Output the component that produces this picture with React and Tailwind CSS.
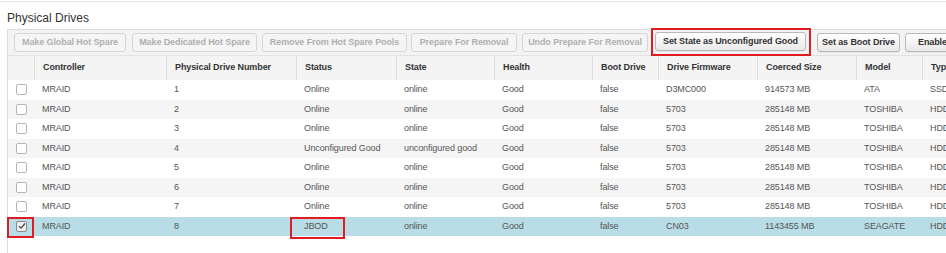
import React from 'react';

const COLS = [
  { key: 'sel', label: '', w: 'w-[26px]' },
  { key: 'controller', label: 'Controller', w: 'w-[132px]' },
  { key: 'number', label: 'Physical Drive Number', w: 'w-[130px]' },
  { key: 'status', label: 'Status', w: 'w-[100px]' },
  { key: 'state', label: 'State', w: 'w-[98px]' },
  { key: 'health', label: 'Health', w: 'w-[98px]' },
  { key: 'boot', label: 'Boot Drive', w: 'w-[66px]' },
  { key: 'firmware', label: 'Drive Firmware', w: 'w-[99px]' },
  { key: 'size', label: 'Coerced Size', w: 'w-[99px]' },
  { key: 'model', label: 'Model', w: 'w-[66px]' },
  { key: 'type', label: 'Type', w: 'w-[80px]' },
];

const DRIVES = [
  { n: '1', status: 'Online', state: 'online', fw: 'D3MC000', size: '914573 MB', model: 'ATA', type: 'SSD' },
  { n: '2', status: 'Online', state: 'online', fw: '5703', size: '285148 MB', model: 'TOSHIBA', type: 'HDD' },
  { n: '3', status: 'Online', state: 'online', fw: '5703', size: '285148 MB', model: 'TOSHIBA', type: 'HDD' },
  { n: '4', status: 'Unconfigured Good', state: 'unconfigured good', fw: '5703', size: '285148 MB', model: 'TOSHIBA', type: 'HDD' },
  { n: '5', status: 'Online', state: 'online', fw: '5703', size: '285148 MB', model: 'TOSHIBA', type: 'HDD' },
  { n: '6', status: 'Online', state: 'online', fw: '5703', size: '285148 MB', model: 'TOSHIBA', type: 'HDD' },
  { n: '7', status: 'Online', state: 'online', fw: '5703', size: '285148 MB', model: 'TOSHIBA', type: 'HDD' },
  { n: '8', status: 'JBOD', state: 'online', fw: 'CN03', size: '1143455 MB', model: 'SEAGATE', type: 'HDD', selected: true },
];

function ToolButton({ label, w, disabled, className = '' }) {
  return (
    <button
      disabled={disabled}
      className={`h-[19px] ${w} shrink-0 rounded-[3px] border font-bold text-[9px] tracking-[-0.1px] leading-none whitespace-nowrap overflow-hidden ${
        disabled
          ? 'border-[#d6d6d6] bg-[#f5f5f5] text-[#b0b0b0]'
          : 'border-[#b9b9b9] bg-gradient-to-b from-white to-[#e9e9e9] text-[#333] shadow-[0_1px_0_rgba(0,0,0,0.06)]'
      } ${className}`}
    >
      {label}
    </button>
  );
}

function Checkbox({ checked }) {
  return (
    <span
      className={`flex h-[11px] w-[11px] items-center justify-center rounded-[2px] border ${
        checked ? 'border-[#8a8a8a] bg-[#eeeeee]' : 'border-[#b5b5b5] bg-white'
      }`}
    >
      {checked && (
        <svg width="8" height="8" viewBox="0 0 8 8">
          <polyline points="1,4.2 3,6.2 7,1.5" fill="none" stroke="#444" strokeWidth="1.2" />
        </svg>
      )}
    </span>
  );
}

export default function App() {
  return (
    <div className="w-[946px] h-[253px] overflow-hidden bg-white font-['Liberation_Sans',Arial,sans-serif]">
      <div className="mt-[1px] border-t border-[#e4e4e4]" />
      <div className="ml-[7px] mt-[8px] h-[16px] text-[12px] leading-[16px] text-[#333]">Physical Drives</div>

      <div className="ml-[7px] mt-[3px] w-[1000px] h-[300px] border-l border-t border-[#dcdcdc]">
        {/* toolbar */}
        <div className="flex h-[26px] items-center border-b border-[#e2e2e2] bg-[#f3f3f3] pl-[6px]">
          <ToolButton label="Make Global Hot Spare" w="w-[112px]" disabled />
          <ToolButton label="Make Dedicated Hot Spare" w="w-[125px]" disabled className="ml-[6px]" />
          <ToolButton label="Remove From Hot Spare Pools" w="w-[145px]" disabled className="ml-[5px]" />
          <ToolButton label="Prepare For Removal" w="w-[106px]" disabled className="ml-[4px]" />
          <ToolButton label="Undo Prepare For Removal" w="w-[126px]" disabled className="ml-[5px]" />
          <div className="ml-[3px] -mt-[1px] flex h-[28px] items-center border-2 border-[#e01b22] pl-[2px] pr-[3px] pb-[1px]">
            <ToolButton label="Set State as Unconfigured Good" w="w-[151px]" />
          </div>
          <ToolButton label="Set as Boot Drive" w="w-[83px]" className="ml-[6px]" />
          <ToolButton label="Enable Security" w="w-[92px]" className="ml-[5px]" />
        </div>

        {/* header */}
        <div className="flex h-[24px] bg-[#f4f4f4] text-[9px] tracking-[-0.1px] font-bold text-[#333]">
          {COLS.map((c, i) => (
            <div
              key={c.key}
              className={`${c.w} shrink-0 flex items-center pl-[8px] whitespace-nowrap ${i > 0 ? 'border-l border-[#dedede]' : ''}`}
            >
              {c.label}
            </div>
          ))}
        </div>

        {/* rows */}
        {DRIVES.map((d, i) => {
          const bg = d.selected ? 'bg-[#b9dde6]' : i % 2 === 1 ? 'bg-[#f5f5f5]' : 'bg-white';
          const cells = ['MRAID', d.n, d.status, d.state, 'Good', 'false', d.fw, d.size, d.model, d.type];
          return (
            <div key={d.n} className={`flex h-[19.5px] ${bg} text-[9px] tracking-[-0.1px] text-[#555]`}>
              <div className="relative flex w-[26px] shrink-0 items-center pl-[8px]">
                <Checkbox checked={d.selected} />
                {d.selected && (
                  <span className="absolute -left-[1px] top-0 h-[21px] w-[27px] border-2 border-[#e01b22]" />
                )}
              </div>
              {cells.map((v, j) => (
                <div
                  key={j}
                  className={`relative ${COLS[j + 1].w} shrink-0 flex items-center pl-[8px] whitespace-nowrap`}
                >
                  {v}
                  {d.selected && j === 2 && (
                    <span className="absolute -left-[6px] top-0 h-[22px] w-[55px] border-2 border-[#e01b22]" />
                  )}
                </div>
              ))}
            </div>
          );
        })}
      </div>
    </div>
  );
}
